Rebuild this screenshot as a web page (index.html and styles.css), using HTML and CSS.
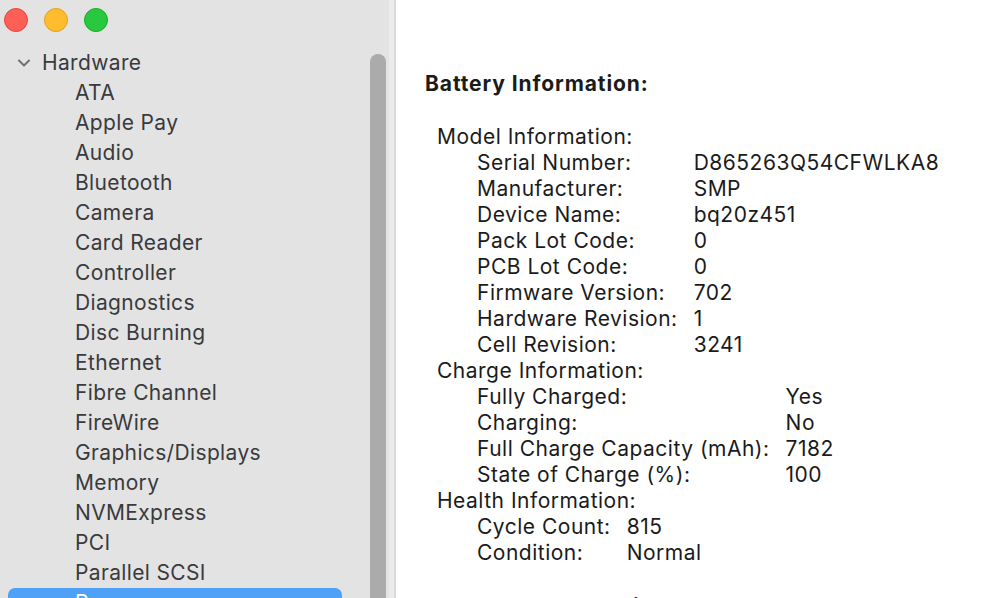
FILE: index.html
```html
<!DOCTYPE html>
<html lang="en">
<head>
<meta charset="UTF-8" />
<meta name="viewport" content="width=device-width, initial-scale=1" />
<title>System Information</title>
<link rel="stylesheet" href="styles.css">
</head>
<body>
  <div class="window">
    <aside class="sidebar">
      <div class="lights">
        <span class="light red"></span>
        <span class="light yellow"></span>
        <span class="light green"></span>
      </div>

      <div class="tree">
        <div class="group">
          <svg class="chevron" width="14" height="10" viewBox="0 0 14 10">
            <path d="M2 2.5 L7 7.5 L12 2.5" fill="none" stroke="#707070" stroke-width="2" stroke-linecap="round" stroke-linejoin="round"/>
          </svg>
          Hardware
        </div>
        <div class="item">ATA</div>
        <div class="item">Apple Pay</div>
        <div class="item">Audio</div>
        <div class="item">Bluetooth</div>
        <div class="item">Camera</div>
        <div class="item">Card Reader</div>
        <div class="item">Controller</div>
        <div class="item">Diagnostics</div>
        <div class="item">Disc Burning</div>
        <div class="item">Ethernet</div>
        <div class="item">Fibre Channel</div>
        <div class="item">FireWire</div>
        <div class="item">Graphics/Displays</div>
        <div class="item">Memory</div>
        <div class="item">NVMExpress</div>
        <div class="item">PCI</div>
        <div class="item">Parallel SCSI</div>
        <div class="item selected">Power</div>
        <div class="item">Printers</div>
      </div>

      <!-- overlay scroller -->
      <div class="scroll-track"></div>
      <div class="scroll-thumb"></div>
    </aside>

    <main class="detail">
      <h2 class="heading">Battery Information:</h2>

      <div class="section">Model Information:</div>
      <div class="fields">
        <span>Serial Number:</span><span>D865263Q54CFWLKA8</span>
        <span>Manufacturer:</span><span>SMP</span>
        <span>Device Name:</span><span>bq20z451</span>
        <span>Pack Lot Code:</span><span>0</span>
        <span>PCB Lot Code:</span><span>0</span>
        <span>Firmware Version:</span><span>702</span>
        <span>Hardware Revision:</span><span>1</span>
        <span>Cell Revision:</span><span>3241</span>
      </div>

      <div class="section">Charge Information:</div>
      <div class="fields">
        <span>Fully Charged:</span><span>Yes</span>
        <span>Charging:</span><span>No</span>
        <span>Full Charge Capacity (mAh):</span><span>7182</span>
        <span>State of Charge (%):</span><span>100</span>
      </div>

      <div class="section">Health Information:</div>
      <div class="fields">
        <span>Cycle Count:</span><span>815</span>
        <span>Condition:</span><span>Normal</span>
      </div>

      <h2 class="heading next">System Power Settings:</h2>
    </main>
  </div>
</body>
</html>
```

FILE: styles.css
```css
* {
  box-sizing: border-box;
}

body {
  margin: 0;
  font-family: Inter, "Noto Sans", sans-serif;
  background: #ffffff;
}

.window {
  display: flex;
  height: 598px;
  overflow: hidden;
}

.sidebar {
  position: relative;
  width: 396px;
  flex-shrink: 0;
  background: #e3e3e4;
  border-right: 2px solid #d9d9d9;
  color: #3a3a3c;
  font-size: 21px;
  letter-spacing: 0.35px;
}

.lights {
  display: flex;
  gap: 16px;
  padding: 8px 0 0 4px;
  height: 48px;
}

.light {
  width: 24px;
  height: 24px;
  border-radius: 50%;
}

.light.red { background: #fe5f57; border: 1px solid #e2463f; }
.light.yellow { background: #febc2e; border: 1px solid #e1a116; }
.light.green { background: #28c840; border: 1px solid #1aab29; }

.tree {
  line-height: 30px;
}

.group {
  display: flex;
  align-items: center;
  height: 30px;
  padding-left: 17px;
}

.chevron {
  margin-right: 11px;
}

.item {
  height: 30px;
  padding-left: 75px;
  margin-right: 52px;
}

.item.selected {
  margin-left: 8px;
  padding-left: 67px;
  border-radius: 7px;
  background: #4ea1f7;
  color: #ffffff;
}

.scroll-track {
  position: absolute;
  top: 0;
  bottom: 0;
  left: 389px;
  width: 5px;
  background: #ebebeb;
}

.scroll-thumb {
  position: absolute;
  top: 54px;
  bottom: -20px;
  left: 370px;
  width: 16px;
  border-radius: 8px;
  background: #ababab;
}

.detail {
  flex: 1;
  padding: 71px 0 0 29px;
  color: #1b1b1b;
  font-size: 21px;
  line-height: 26px;
  letter-spacing: 0.5px;
}

.heading {
  margin: 0 0 27px;
  font-size: 21px;
  line-height: 26px;
  font-weight: 700;
  letter-spacing: 0.9px;
}

.heading.next {
  margin-top: 28px;
}

.section {
  padding-left: 12px;
}

.fields {
  display: grid;
  grid-template-columns: max-content max-content;
  column-gap: 16px;
  padding-left: 52px;
}
```
